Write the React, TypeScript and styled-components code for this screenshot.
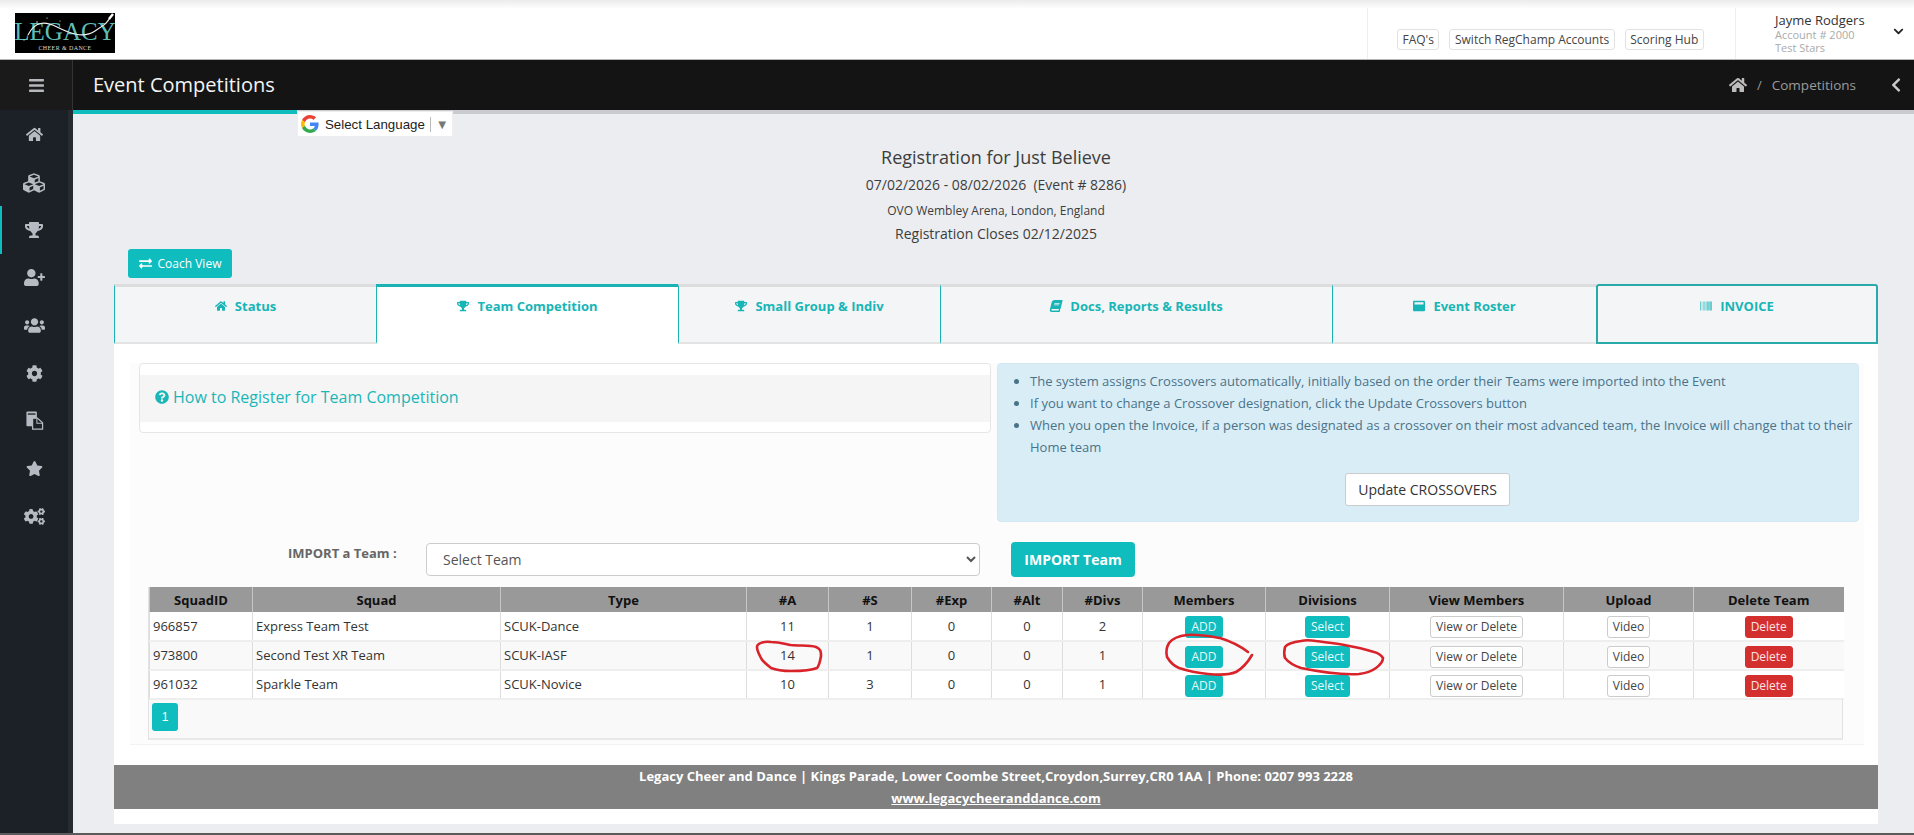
import React from "react";
import styled, { createGlobalStyle } from "styled-components";
import {
  FaBars,
  FaBarcode,
  FaBook,
  FaChevronDown,
  FaChevronLeft,
  FaCog,
  FaCogs,
  FaCubes,
  FaExchangeAlt,
  FaHome,
  FaQuestionCircle,
  FaStar,
  FaTrophy,
  FaUserPlus,
  FaUsers,
  FaWindowMaximize,
} from "react-icons/fa";

const TEAL = "#0fbcbe";

const GlobalStyle = createGlobalStyle`
  html, body {
    margin: 0;
    padding: 0;
    background: #ebedf0;
  }
  * {
    box-sizing: border-box;
  }
  body {
    font-family: "Open Sans", "Liberation Sans", sans-serif;
    color: #333;
  }
`;

const Page = styled.div`
  width: 1914px;
  height: 835px;
  display: flex;
  flex-direction: column;
  overflow: hidden;
`;

const TopBar = styled.header`
  height: 60px;
  flex: none;
  display: flex;
  align-items: stretch;
  justify-content: space-between;
  background: linear-gradient(#ebebeb, #fff 9px);
  border-bottom: 1px solid #b5b5b5;
`;

const Logo = styled.div`
  position: relative;
  width: 100px;
  height: 40px;
  margin: 13px 0 0 15px;
  background: #000;
  display: flex;
  flex-direction: column;
  align-items: center;
  overflow: hidden;
`;

const LogoName = styled.span`
  font-family: "Liberation Serif", serif;
  font-size: 25px;
  line-height: 24px;
  margin-top: 7px;
  letter-spacing: 0;
  color: #5fbdb4;
`;

const LogoSub = styled.span`
  font-family: "Liberation Serif", serif;
  font-size: 6px;
  line-height: 8px;
  letter-spacing: 0.4px;
  color: #d8d8d8;
`;

const LogoSwoosh = styled.svg`
  position: absolute;
  inset: 0;
`;

const TopRight = styled.div`
  display: flex;
  align-items: stretch;
  margin-top: 8px;
`;

const TopLinks = styled.nav`
  width: 368px;
  display: flex;
  align-items: flex-start;
  gap: 10px;
  padding: 21px 0 0 29px;
  border-left: 1px solid #eeeeee;
`;

const TopLink = styled.a`
  display: block;
  height: 21px;
  padding: 0 4.5px;
  font-size: 12px;
  line-height: 19px;
  color: #444;
  background: #fff;
  border: 1px solid #e2e2e2;
  border-radius: 3px;
`;

const UserBlock = styled.div`
  width: 179px;
  display: flex;
  justify-content: space-between;
  padding: 4px 10px 0 39px;
  border-left: 1px solid #eeeeee;
  color: #222;
`;

const UserText = styled.div`
  display: flex;
  flex-direction: column;
`;

const UserName = styled.span`
  font-size: 13px;
  line-height: 16px;
  color: #333;
`;

const UserMeta = styled.span`
  font-size: 11px;
  line-height: 13px;
  color: #aaa;
`;

const UserCaret = styled.span`
  display: flex;
  margin-top: 14px;
  font-size: 11px;
`;

const SubHeader = styled.div`
  height: 50px;
  flex: none;
  display: flex;
  align-items: center;
  background: #141414;
  color: #fff;
`;

const MenuToggle = styled.div`
  width: 73px;
  height: 100%;
  display: flex;
  align-items: center;
  justify-content: center;
  background: #1a1a1a;
  border-right: 1px solid #333;
  color: #b5b8bd;
  font-size: 17px;
`;

const PageTitle = styled.h1`
  flex: 1;
  margin: 0 0 0 20px;
  font-size: 20px;
  font-weight: 400;
  line-height: 28px;
  color: #f4f4f4;
`;

const Crumbs = styled.div`
  display: flex;
  align-items: center;
  color: #9b9b9b;
  font-size: 13.5px;
`;

const CrumbHome = styled.span`
  display: flex;
  color: #bcbcbc;
  font-size: 18px;
`;

const CrumbSlash = styled.span`
  margin: 0 10px;
  font-size: 13px;
`;

const CrumbBack = styled.span`
  display: flex;
  margin: 0 10px 0 32px;
  color: #c8c8c8;
  font-size: 16px;
`;

const Body = styled.div`
  flex: 1;
  min-height: 0;
  display: flex;
`;

const Sidebar = styled.aside`
  width: 73px;
  flex: none;
  padding-top: 1px;
  background: #1c2027;
  border-right: 5px solid #262a31;
`;

const SideItem = styled.div<{ $active?: boolean }>`
  height: 47.7px;
  display: flex;
  align-items: center;
  justify-content: center;
  color: #b6bac2;
  box-shadow: ${(p) => (p.$active ? `inset 2px 0 0 ${TEAL}` : "none")};
`;

const Main = styled.main`
  position: relative;
  flex: 1;
  min-width: 0;
  padding: 0 36px 0 41px;
`;

const LoadStrip = styled.div`
  height: 4px;
  margin: 0 -36px 0 -41px;
  background: #c9cbcf;
`;

const LoadFill = styled.div`
  width: 224px;
  height: 100%;
  background: ${TEAL};
`;

const LangPicker = styled.div`
  position: absolute;
  top: 1px;
  left: 224px;
  width: 156px;
  height: 26px;
  display: flex;
  align-items: center;
  padding-left: 3px;
  background: #fff;
  border: 1px solid #eeeeee;
  font-family: "Liberation Sans", sans-serif;
  font-size: 13.3px;
  color: #222;
`;

const LangLabel = styled.span`
  margin-left: 6px;
`;

const LangArrow = styled.span`
  margin-left: 5px;
  padding-left: 5px;
  border-left: 1px solid #bbb;
  font-size: 13px;
  line-height: 15px;
  color: #777;
`;

const EventHead = styled.div`
  padding-top: 30px;
  text-align: center;
  color: #3d3d3d;
`;

const EventName = styled.div`
  font-size: 18px;
  line-height: 27px;
`;

const EventDates = styled.div`
  font-size: 14px;
  line-height: 28px;
`;

const EventPlace = styled.div`
  font-size: 12px;
  line-height: 23px;
`;

const EventCloses = styled.div`
  font-size: 14px;
  line-height: 24px;
`;

const CoachButton = styled.a`
  width: 104px;
  height: 29px;
  margin: 3px 0 6px 14px;
  display: flex;
  align-items: center;
  justify-content: center;
  gap: 6px;
  font-size: 12px;
  color: #fff;
  background: ${TEAL};
  border-radius: 3px;
`;

const Tabs = styled.div`
  display: grid;
  grid-template-columns: 262px 302px 262px 392px 264px 282px;
  height: 60px;
`;

const Tab = styled.div<{ $active?: boolean; $boxed?: boolean }>`
  display: flex;
  justify-content: center;
  align-items: flex-start;
  gap: 8px;
  padding-top: 10px;
  font-size: 13px;
  font-weight: 700;
  line-height: 18px;
  color: #18b5b7;
  background: ${(p) => (p.$active ? "#fff" : "#f4f5f6")};
  border-top: 3px solid ${(p) => (p.$active ? "#19b3b5" : "#dcdddf")};
  border-left: 1px solid #19b3b5;
  border-bottom: 2px solid ${(p) => (p.$active ? "#fff" : "#e4e4e4")};
  ${(p) =>
    p.$boxed &&
    `
    border: 2px solid #2aa9a9;
    border-radius: 3px 3px 0 0;
    padding-top: 11px;
  `}
`;

const TabIcon = styled.span`
  display: flex;
  height: 18px;
  align-items: center;
  font-size: 12px;
`;

const SlantedBook = styled(FaBook)`
  transform: skewX(-14deg);
`;

const Panel = styled.section`
  background: #fff;
  padding: 19px 14px 15px 0;
`;

const Workspace = styled.div`
  margin-left: 16px;
  padding: 0 5px 4px 10px;
  background: #fcfcfc;
  border-bottom: 1px solid #f2f2f2;
`;

const TopRow = styled.div`
  display: flex;
  align-items: flex-start;
  gap: 5px;
`;

const HelpCard = styled.div`
  width: 852px;
  height: 70px;
  margin-left: -1px;
  padding: 11px 0 10px;
  background: #fff;
  border: 1px solid #e6e6e6;
  border-radius: 4px;
`;

const HelpTitle = styled.div`
  height: 47px;
  display: flex;
  align-items: center;
  gap: 4px;
  padding: 0 0 3px 15px;
  background: #f5f5f5;
  color: #1bb6b8;
  font-size: 16px;
`;

const InfoBox = styled.div`
  width: 862px;
  height: 159px;
  margin-left: 1px;
  padding: 6px 1px 0 0;
  background: #d9edf7;
  border: 1px solid #d3e8f3;
  border-radius: 4px;
  color: #4a7388;
  font-size: 13px;
  line-height: 22px;
`;

const InfoList = styled.ul`
  margin: 0;
  padding-left: 32px;
`;

const InfoAction = styled.div`
  display: flex;
  justify-content: center;
  margin-top: 15px;
`;

const WhiteButton = styled.a`
  height: 33px;
  padding: 0 12px;
  font-size: 14px;
  line-height: 31px;
  color: #333;
  background: #fff;
  border: 1px solid #ccc;
  border-radius: 3px;
`;

const ImportRow = styled.div`
  display: flex;
  align-items: center;
  margin-top: 20px;
  padding-left: 148px;
`;

const ImportLabel = styled.label`
  width: 138px;
  align-self: flex-start;
  font-size: 13px;
  font-weight: 700;
  line-height: 22px;
  color: #666;
`;

const TeamSelect = styled.select`
  width: 554px;
  height: 33px;
  padding-left: 12px;
  font-family: inherit;
  font-size: 14px;
  color: #555;
  background: #fff;
  border: 1px solid #ccc;
  border-radius: 4px;
`;

const ImportButton = styled.a`
  width: 124px;
  height: 35px;
  margin-left: 31px;
  font-size: 14px;
  font-weight: 700;
  line-height: 35px;
  text-align: center;
  color: #fff;
  background: ${TEAL};
  border-radius: 4px;
`;

const TableWrap = styled.div`
  position: relative;
  margin: 10px 16px 0 8px;
  background: #f9f9f9;
  border-bottom: 2px solid #e8e8e8;
  border-left: 1px solid #e2e2e2;
  border-right: 1px solid #e2e2e2;
`;

const SquadTable = styled.table`
  width: 100%;
  table-layout: fixed;
  border-collapse: collapse;
  font-size: 13px;
`;

const HeadCell = styled.th`
  height: 25px;
  padding: 0 3px;
  font-size: 13px;
  font-weight: 700;
  color: #111;
  background: #999;
  border-left: 1px solid #c6c6c6;
`;

const Row = styled.tr<{ $odd: boolean }>`
  background: ${(p) => (p.$odd ? "#f9f9f9" : "#fff")};
  border-bottom: 2px solid #eeeeee;
`;

const Cell = styled.td<{ $center?: boolean }>`
  height: 29px;
  padding: 0 3px 1px;
  color: #333;
  text-align: ${(p) => (p.$center ? "center" : "left")};
  border-left: 1px solid #dddddd;
`;

const tones = {
  teal: { bg: TEAL, fg: "#e9fbfb", line: TEAL },
  light: { bg: "#fff", fg: "#444", line: "#ccc" },
  red: { bg: "#d32f2f", fg: "#fbe3e3", line: "#d32f2f" },
};

const RowButton = styled.a<{ $tone: keyof typeof tones }>`
  display: inline-block;
  height: 22px;
  padding: 0 5px;
  font-size: 12px;
  line-height: 20px;
  vertical-align: middle;
  margin-top: 3px;
  color: ${(p) => tones[p.$tone].fg};
  background: ${(p) => tones[p.$tone].bg};
  border: 1px solid ${(p) => tones[p.$tone].line};
  border-radius: 3px;
`;

const Pager = styled.div`
  height: 38px;
  padding: 3px 3px 0;
`;

const PageNumber = styled.a`
  display: block;
  width: 26px;
  height: 28px;
  font-family: "Liberation Sans", sans-serif;
  font-size: 12px;
  line-height: 28px;
  text-align: center;
  color: #fff;
  background: ${TEAL};
  border-radius: 3px;
`;

const Scribbles = styled.svg`
  position: absolute;
  top: 0;
  left: 0;
  width: 100%;
  height: 100%;
  pointer-events: none;
  overflow: visible;
`;

const Footer = styled.footer`
  height: 44px;
  margin: 20px -14px 0 0;
  text-align: center;
  font-size: 13px;
  font-weight: 700;
  line-height: 22px;
  color: #fff;
  background: #808080;
`;

const FooterLink = styled.a`
  display: block;
  color: #fff;
  text-decoration: underline;
`;

const PageEdge = styled.div`
  height: 2px;
  flex: none;
  background: #5a5a5a;
`;

// two sheets, the front one dark with a folded corner
const FilesIcon = ({ size }: { size: number }) => (
  <svg width={size} height={size} viewBox="0 0 19 20">
    <rect x="1" y="0.5" width="11" height="15.5" rx="1" fill="#b6bac2" />
    <rect x="2.5" y="2.5" width="8" height="1.4" fill="#1c2027" />
    <path d="M7.5 7.5 H12.5 L18 12.5 V19 H7.5 Z" fill="#1c2027" stroke="#b6bac2" strokeWidth="1.3" />
    <path d="M12 8 V13 H17.5" fill="none" stroke="#b6bac2" strokeWidth="1.1" />
  </svg>
);

const sideItems = [
  { icon: FaHome, size: 17 },
  { icon: FaCubes, size: 22 },
  { icon: FaTrophy, size: 18, active: true },
  { icon: FaUserPlus, size: 21 },
  { icon: FaUsers, size: 21 },
  { icon: FaCog, size: 17 },
  { icon: FilesIcon, size: 19 },
  { icon: FaStar, size: 17 },
  { icon: FaCogs, size: 21 },
];

const tabs = [
  { label: "Status", icon: FaHome },
  { label: "Team Competition", icon: FaTrophy, active: true },
  { label: "Small Group & Indiv", icon: FaTrophy },
  { label: "Docs, Reports & Results", icon: SlantedBook },
  { label: "Event Roster", icon: FaWindowMaximize },
  { label: "INVOICE", icon: FaBarcode, boxed: true },
];

const columns = [
  { title: "SquadID", width: 103 },
  { title: "Squad", width: 248 },
  { title: "Type", width: 246 },
  { title: "#A", width: 82 },
  { title: "#S", width: 83 },
  { title: "#Exp", width: 80 },
  { title: "#Alt", width: 71 },
  { title: "#Divs", width: 80 },
  { title: "Members", width: 123 },
  { title: "Divisions", width: 124 },
  { title: "View Members", width: 174 },
  { title: "Upload", width: 130 },
  { title: "Delete Team", width: 150 },
];

const squads = [
  { id: "966857", name: "Express Team Test", type: "SCUK-Dance", a: 11, s: 1, exp: 0, alt: 0, divs: 2 },
  { id: "973800", name: "Second Test XR Team", type: "SCUK-IASF", a: 14, s: 1, exp: 0, alt: 0, divs: 1 },
  { id: "961032", name: "Sparkle Team", type: "SCUK-Novice", a: 10, s: 3, exp: 0, alt: 0, divs: 1 },
];

const GoogleMark = () => (
  <svg width="18" height="18" viewBox="0 0 48 48">
    <path fill="#EA4335" d="M24 9.5c3.5 0 6.7 1.2 9.2 3.6l6.9-6.9C35.9 2.4 30.5 0 24 0 14.6 0 6.5 5.4 2.6 13.2l8 6.2C12.5 13.6 17.8 9.5 24 9.5z" />
    <path fill="#4285F4" d="M46.9 24.5c0-1.6-.1-3.1-.4-4.5H24v9h12.9c-.6 3-2.2 5.5-4.7 7.2l7.7 6c4.5-4.2 7-10.3 7-17.7z" />
    <path fill="#FBBC05" d="M10.5 28.6c-.5-1.4-.8-3-.8-4.6s.3-3.2.8-4.6l-8-6.2C.9 16.5 0 20.1 0 24s.9 7.5 2.6 10.8l7.9-6.2z" />
    <path fill="#34A853" d="M24 48c6.5 0 11.9-2.1 15.9-5.8l-7.7-6c-2.1 1.4-4.9 2.3-8.2 2.3-6.2 0-11.5-4.2-13.4-9.8l-8 6.2C6.5 42.6 14.6 48 24 48z" />
  </svg>
);

export default function App() {
  return (
    <Page>
      <GlobalStyle />
      <TopBar>
        <Logo>
          <LogoName>LEGACY</LogoName>
          <LogoSub>CHEER &amp; DANCE</LogoSub>
          <LogoSwoosh width="100" height="40" viewBox="0 0 100 40">
            <path d="M13 22 C20 8 30 8 42 14 S68 26 80 18 S92 10 96 3" fill="none" stroke="#f2f2f2" strokeWidth="1.2" />
            <path d="M94 6 L98 1" stroke="#fff" strokeWidth="2.4" />
            <circle cx="22" cy="9" r="0.7" fill="#fff" />
            <circle cx="32" cy="5" r="0.6" fill="#fff" />
            <circle cx="9" cy="27" r="0.6" fill="#fff" />
            <circle cx="45" cy="8" r="0.6" fill="#fff" />
          </LogoSwoosh>
        </Logo>
        <TopRight>
          <TopLinks>
            <TopLink>FAQ's</TopLink>
            <TopLink>Switch RegChamp Accounts</TopLink>
            <TopLink>Scoring Hub</TopLink>
          </TopLinks>
          <UserBlock>
            <UserText>
              <UserName>Jayme Rodgers</UserName>
              <UserMeta>Account # 2000</UserMeta>
              <UserMeta>Test Stars</UserMeta>
            </UserText>
            <UserCaret>
              <FaChevronDown />
            </UserCaret>
          </UserBlock>
        </TopRight>
      </TopBar>

      <SubHeader>
        <MenuToggle>
          <FaBars />
        </MenuToggle>
        <PageTitle>Event Competitions</PageTitle>
        <Crumbs>
          <CrumbHome>
            <FaHome />
          </CrumbHome>
          <CrumbSlash>/</CrumbSlash>
          Competitions
          <CrumbBack>
            <FaChevronLeft />
          </CrumbBack>
        </Crumbs>
      </SubHeader>

      <Body>
        <Sidebar>
          {sideItems.map((item, i) => (
            <SideItem key={i} $active={item.active}>
              <item.icon size={item.size} />
            </SideItem>
          ))}
        </Sidebar>

        <Main>
          <LoadStrip>
            <LoadFill />
          </LoadStrip>
          <LangPicker>
            <GoogleMark />
            <LangLabel>Select Language</LangLabel>
            <LangArrow>▼</LangArrow>
          </LangPicker>

          <EventHead>
            <EventName>Registration for Just Believe</EventName>
            <EventDates>07/02/2026 - 08/02/2026 &nbsp;(Event # 8286)</EventDates>
            <EventPlace>OVO Wembley Arena, London, England</EventPlace>
            <EventCloses>Registration Closes 02/12/2025</EventCloses>
          </EventHead>

          <CoachButton>
            <FaExchangeAlt size={13} />
            Coach View
          </CoachButton>

          <Tabs>
            {tabs.map((tab) => (
              <Tab key={tab.label} $active={tab.active} $boxed={tab.boxed}>
                <TabIcon>
                  <tab.icon />
                </TabIcon>
                {tab.label}
              </Tab>
            ))}
          </Tabs>

          <Panel>
            <Workspace>
              <TopRow>
                <HelpCard>
                  <HelpTitle>
                    <FaQuestionCircle size={14} />
                    How to Register for Team Competition
                  </HelpTitle>
                </HelpCard>
                <InfoBox>
                  <InfoList>
                    <li>The system assigns Crossovers automatically, initially based on the order their Teams were imported into the Event</li>
                    <li>If you want to change a Crossover designation, click the Update Crossovers button</li>
                    <li>When you open the Invoice, if a person was designated as a crossover on their most advanced team, the Invoice will change that to their Home team</li>
                  </InfoList>
                  <InfoAction>
                    <WhiteButton>Update CROSSOVERS</WhiteButton>
                  </InfoAction>
                </InfoBox>
              </TopRow>

              <ImportRow>
                <ImportLabel>IMPORT a Team :</ImportLabel>
                <TeamSelect defaultValue="">
                  <option value="">Select Team</option>
                </TeamSelect>
                <ImportButton>IMPORT Team</ImportButton>
              </ImportRow>

              <TableWrap>
                <SquadTable>
                  <colgroup>
                    {columns.map((col) => (
                      <col key={col.title} width={col.width} />
                    ))}
                  </colgroup>
                  <thead>
                    <tr>
                      {columns.map((col) => (
                        <HeadCell key={col.title}>{col.title}</HeadCell>
                      ))}
                    </tr>
                  </thead>
                  <tbody>
                    {squads.map((squad, i) => (
                      <Row key={squad.id} $odd={i % 2 === 1}>
                        <Cell>{squad.id}</Cell>
                        <Cell>{squad.name}</Cell>
                        <Cell>{squad.type}</Cell>
                        <Cell $center>{squad.a}</Cell>
                        <Cell $center>{squad.s}</Cell>
                        <Cell $center>{squad.exp}</Cell>
                        <Cell $center>{squad.alt}</Cell>
                        <Cell $center>{squad.divs}</Cell>
                        <Cell $center>
                          <RowButton $tone="teal">ADD</RowButton>
                        </Cell>
                        <Cell $center>
                          <RowButton $tone="teal">Select</RowButton>
                        </Cell>
                        <Cell $center>
                          <RowButton $tone="light">View or Delete</RowButton>
                        </Cell>
                        <Cell $center>
                          <RowButton $tone="light">Video</RowButton>
                        </Cell>
                        <Cell $center>
                          <RowButton $tone="red">Delete</RowButton>
                        </Cell>
                      </Row>
                    ))}
                  </tbody>
                </SquadTable>
                <Pager>
                  <PageNumber>1</PageNumber>
                </Pager>
                {/* red pen marks drawn over the table */}
                <Scribbles>
                  <g transform="translate(-149 -587)" fill="none" stroke="#d8232a" strokeWidth="2.6" strokeLinecap="round">
                    <path d="M757 647 C757 643 765 641 771 642 C780 642 785 644 791 645 C800 646 810 645 816 647 C821 649 821 652 821 656 C820 662 819 666 817 668 C810 671 800 671 791 671 C783 671 776 670 771 668 C766 664 762 661 761 658 C759 654 757 651 757 647" />
                    <path d="M1248 652 C1240 646 1230 641 1220 638 C1208 636 1197 634 1187 635 C1178 636 1172 639 1169 643 C1166 648 1166 653 1167 657 C1170 662 1174 666 1179 668 C1188 671 1198 673 1208 674 C1218 675 1229 675 1236 672 C1243 668 1248 662 1252 655" />
                    <path d="M1316 641 C1310 640 1305 640 1301 641 C1293 642 1287 644 1285 647 C1284 651 1284 655 1285 658 C1289 663 1295 666 1301 668 C1320 672 1340 675 1359 674 C1367 673 1372 671 1376 668 C1380 665 1383 661 1383 658 C1381 655 1378 653 1374 652 C1362 648 1350 646 1339 644 C1331 643 1323 642 1316 641" />
                  </g>
                </Scribbles>
              </TableWrap>
            </Workspace>

            <Footer>
              Legacy Cheer and Dance | Kings Parade, Lower Coombe Street,Croydon,Surrey,CR0 1AA | Phone: 0207 993 2228
              <FooterLink>www.legacycheeranddance.com</FooterLink>
            </Footer>
          </Panel>
        </Main>
      </Body>
      <PageEdge />
    </Page>
  );
}
